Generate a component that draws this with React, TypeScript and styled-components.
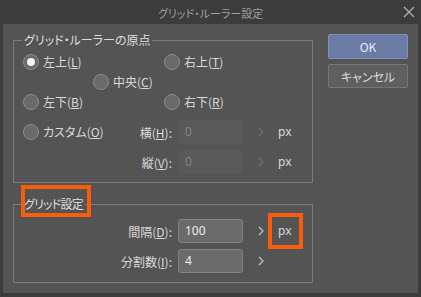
import React from 'react';
import styled, { createGlobalStyle } from 'styled-components';

const GlobalStyle = createGlobalStyle`
  html, body {
    margin: 0;
    padding: 0;
    background: #3c3c3c;
  }
  body {
    font-family: "Noto Sans CJK JP", "Noto Sans", sans-serif;
    font-feature-settings: "palt";
    font-size: 12px;
    color: #dadada;
  }
`;

const Window = styled.div`
  width: 421px;
  height: 297px;
  background: #3c3c3c;
  display: flex;
  flex-direction: column;
`;

const TitleBar = styled.div`
  height: 24px;
  display: grid;
  grid-template-columns: 1fr auto 1fr;
  align-items: center;
  color: #a0a0a0;
  font-size: 11px;
`;

const Title = styled.div`
  grid-column: 2;
  padding-top: 1px;
`;

const CloseButton = styled.div`
  grid-column: 3;
  justify-self: end;
  margin-right: 6px;
  display: flex;
  align-items: center;
`;

const Body = styled.div`
  margin: 0 3px 4px;
  flex: 1;
  background: #545454;
  padding: 8px 10px 9px;
  display: flex;
  gap: 15px;
  box-sizing: border-box;
`;

const LeftColumn = styled.div`
  width: 300px;
  display: flex;
  flex-direction: column;
  gap: 13px;
`;

const RightColumn = styled.div`
  width: 80px;
  padding-top: 2px;
  display: flex;
  flex-direction: column;
  gap: 5px;
`;

const Group = styled.fieldset<{ $top: number; $bottom: number }>`
  margin: 0;
  min-width: 0;
  border: 1px solid #7b7b7b;
  padding: ${p => p.$top}px 8px ${p => p.$bottom}px;
`;

const Legend = styled.legend<{ $tight?: boolean }>`
  padding: 0 2px;
  line-height: 16px;
  font-size: 12px;
  color: #dedede;
  letter-spacing: ${p => (p.$tight ? '-0.8px' : 'normal')};
`;

const Highlight = styled.span<{ $l: number; $w: number; $t: number; $b: number }>`
  position: relative;
  &::after {
    content: '';
    position: absolute;
    left: ${p => -p.$l}px;
    width: ${p => p.$w}px;
    top: ${p => -p.$t}px;
    bottom: ${p => -p.$b}px;
    box-sizing: border-box;
    border: 4px solid #fa5c0a;
    pointer-events: none;
  }
`;

const RadioGrid = styled.div`
  display: grid;
  grid-template-columns: 70px 71px 1fr;
  grid-auto-rows: 20px;
  align-items: center;
  padding-left: 1px;
`;

const RadioLabel = styled.label<{ $col: number; $row: number }>`
  grid-column: ${p => p.$col};
  grid-row: ${p => p.$row};
  display: flex;
  align-items: center;
  gap: 4px;
  line-height: 16px;
  white-space: nowrap;
`;

const Circle = styled.span<{ $checked?: boolean }>`
  width: 16px;
  height: 16px;
  box-sizing: border-box;
  border-radius: 50%;
  border: 1px solid #8e8e8e;
  background: #6a6a6a;
  display: flex;
  align-items: center;
  justify-content: center;
  &::after {
    content: '';
    display: ${p => (p.$checked ? 'block' : 'none')};
    width: 8px;
    height: 8px;
    border-radius: 50%;
    background: #f4f4f4;
  }
`;

const FieldGrid = styled.div<{ $top: number }>`
  display: grid;
  grid-template-columns: 156px 65px 35px auto;
  grid-auto-rows: 24px;
  row-gap: 6px;
  align-items: center;
  margin-top: ${p => p.$top}px;
`;

const FieldLabel = styled.div`
  display: flex;
  align-items: center;
  justify-content: space-between;
  padding-left: 1px;
  padding-right: 6px;
  white-space: nowrap;
`;

const LabelText = styled.span`
  margin-left: auto;
`;

const NumberBox = styled.input<{ $disabled?: boolean }>`
  width: 65px;
  height: 24px;
  box-sizing: border-box;
  border-radius: 3px;
  border: 1px solid ${p => (p.$disabled ? '#595959' : '#828282')};
  background: ${p => (p.$disabled ? '#595959' : '#6b6b6b')};
  color: ${p => (p.$disabled ? '#858585' : '#ececec')};
  font-family: "Noto Sans", "Liberation Sans", sans-serif;
  font-size: 12px;
  padding: 0 0 2px 6px;
  outline: none;
`;

const ChevronCell = styled.div`
  display: flex;
  justify-content: center;
  align-items: center;
`;

const Unit = styled.span`
  color: #dadada;
  font-family: "Noto Sans", "Liberation Sans", sans-serif;
  font-size: 12px;
  line-height: 16px;
`;

const Button = styled.button<{ $primary?: boolean }>`
  height: ${p => (p.$primary ? 25 : 24)}px;
  border-radius: 2px;
  border: 1px solid ${p => (p.$primary ? '#8090b8' : '#767676')};
  background: ${p => (p.$primary ? '#6a7ba6' : '#5f5f5f')};
  color: ${p => (p.$primary ? '#e6ebf5' : '#dadada')};
  font-family: "Noto Sans CJK JP", "Noto Sans", sans-serif;
  font-feature-settings: "palt";
  font-size: 12px;
  padding: 0;
`;

const Chevron = ({ color }: { color: string }) => (
  <svg width="6" height="10" viewBox="0 0 6 10">
    <polyline points="1,1 5,5 1,9" fill="none" stroke={color} strokeWidth="1.2" />
  </svg>
);

const Radio = ({ col, row, checked, text, key1 }: { col: number; row: number; checked?: boolean; text: string; key1: string }) => (
  <RadioLabel $col={col} $row={row}>
    <Circle $checked={checked} />
    <span>{text}(<u>{key1}</u>)</span>
  </RadioLabel>
);

const App = () => {
  return (
    <Window>
      <GlobalStyle />
      <TitleBar>
        <Title>グリッド・ルーラー設定</Title>
        <CloseButton>
          <svg width="12" height="12" viewBox="0 0 12 12">
            <path d="M1 1 L11 11 M11 1 L1 11" stroke="#b4b4b4" strokeWidth="1.2" />
          </svg>
        </CloseButton>
      </TitleBar>
      <Body>
        <LeftColumn>
          <Group $top={4} $bottom={8}>
            <Legend>グリッド・ルーラーの原点</Legend>
            <RadioGrid>
              <Radio col={1} row={1} checked text="左上" key1="L" />
              <Radio col={3} row={1} text="右上" key1="T" />
              <Radio col={2} row={2} text="中央" key1="C" />
              <Radio col={1} row={3} text="左下" key1="B" />
              <Radio col={3} row={3} text="右下" key1="R" />
            </RadioGrid>
            <FieldGrid $top={8}>
              <FieldLabel>
                <RadioLabel $col={1} $row={1}>
                  <Circle />
                  <span>カスタム(<u>O</u>)</span>
                </RadioLabel>
                <LabelText>横(<u>H</u>):</LabelText>
              </FieldLabel>
              <NumberBox $disabled readOnly defaultValue="0" />
              <ChevronCell><Chevron color="#727272" /></ChevronCell>
              <Unit>px</Unit>
              <FieldLabel>
                <LabelText>縦(<u>V</u>):</LabelText>
              </FieldLabel>
              <NumberBox $disabled readOnly defaultValue="0" />
              <ChevronCell><Chevron color="#727272" /></ChevronCell>
              <Unit>px</Unit>
            </FieldGrid>
          </Group>
          <Group $top={7} $bottom={9}>
            <Legend $tight>
              <Highlight $l={3} $w={70} $t={10} $b={5}>グリッド設定</Highlight>
            </Legend>
            <FieldGrid $top={0}>
              <FieldLabel>
                <LabelText>間隔(<u>D</u>):</LabelText>
              </FieldLabel>
              <NumberBox readOnly defaultValue="100" />
              <ChevronCell><Chevron color="#c4c4c4" /></ChevronCell>
              <Unit>
                <Highlight $l={10} $w={35} $t={9} $b={10}>px</Highlight>
              </Unit>
              <FieldLabel>
                <LabelText>分割数(<u>I</u>):</LabelText>
              </FieldLabel>
              <NumberBox readOnly defaultValue="4" />
              <ChevronCell><Chevron color="#c4c4c4" /></ChevronCell>
              <span />
            </FieldGrid>
          </Group>
        </LeftColumn>
        <RightColumn>
          <Button $primary>OK</Button>
          <Button>キャンセル</Button>
        </RightColumn>
      </Body>
    </Window>
  );
};

export default App;
